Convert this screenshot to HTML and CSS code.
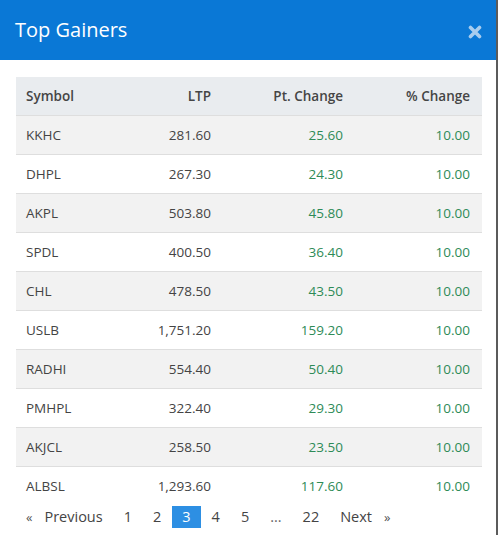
FILE: index.html
```html
<!DOCTYPE html>
<html lang="en">
<head>
<meta charset="utf-8">
<title>Top Gainers</title>
<link rel="stylesheet" href="styles.css">
</head>
<body>
<div class="modal">
  <div class="modal-header">
    <h1 class="modal-title">Top Gainers</h1>
    <span class="close" aria-label="Close">
      <svg width="14" height="14" viewBox="0 0 14 14"><path d="M2.5 2.5 L11.5 11.5 M11.5 2.5 L2.5 11.5" stroke="#a8cdef" stroke-width="3.6" stroke-linecap="round"/></svg>
    </span>
  </div>
  <div class="modal-body">
    <table class="gainers">
      <colgroup>
        <col class="w-sym"><col class="w-ltp"><col class="w-pt"><col class="w-pc">
      </colgroup>
      <thead>
        <tr><th class="c-sym">Symbol</th><th class="c-ltp">LTP</th><th class="c-pt">Pt. Change</th><th class="c-pc">% Change</th></tr>
      </thead>
      <tbody>
        <tr><td class="c-sym">KKHC</td><td class="c-ltp">281.60</td><td class="c-pt up">25.60</td><td class="c-pc up">10.00</td></tr>
        <tr><td class="c-sym">DHPL</td><td class="c-ltp">267.30</td><td class="c-pt up">24.30</td><td class="c-pc up">10.00</td></tr>
        <tr><td class="c-sym">AKPL</td><td class="c-ltp">503.80</td><td class="c-pt up">45.80</td><td class="c-pc up">10.00</td></tr>
        <tr><td class="c-sym">SPDL</td><td class="c-ltp">400.50</td><td class="c-pt up">36.40</td><td class="c-pc up">10.00</td></tr>
        <tr><td class="c-sym">CHL</td><td class="c-ltp">478.50</td><td class="c-pt up">43.50</td><td class="c-pc up">10.00</td></tr>
        <tr><td class="c-sym">USLB</td><td class="c-ltp">1,751.20</td><td class="c-pt up">159.20</td><td class="c-pc up">10.00</td></tr>
        <tr><td class="c-sym">RADHI</td><td class="c-ltp">554.40</td><td class="c-pt up">50.40</td><td class="c-pc up">10.00</td></tr>
        <tr><td class="c-sym">PMHPL</td><td class="c-ltp">322.40</td><td class="c-pt up">29.30</td><td class="c-pc up">10.00</td></tr>
        <tr><td class="c-sym">AKJCL</td><td class="c-ltp">258.50</td><td class="c-pt up">23.50</td><td class="c-pc up">10.00</td></tr>
        <tr><td class="c-sym">ALBSL</td><td class="c-ltp">1,293.60</td><td class="c-pt up">117.60</td><td class="c-pc up">10.00</td></tr>
      </tbody>
    </table>
    <nav class="pager">
      <a class="pg prev"><span class="arrow">«</span>Previous</a>
      <a class="pg">1</a>
      <a class="pg">2</a>
      <a class="pg active">3</a>
      <a class="pg">4</a>
      <a class="pg">5</a>
      <span class="pg dots">...</span>
      <a class="pg">22</a>
      <a class="pg next">Next<span class="arrow arrow-r">»</span></a>
    </nav>
  </div>
</div>
</body>
</html>
```
FILE: styles.css
```css
html, body {
  margin: 0;
  padding: 0;
  background: #ffffff;
}
body {
  font-family: "Open Sans", "Noto Sans", sans-serif;
  color: #444444;
}
.modal {
  width: 496px;
  height: 535px;
  border-right: 2px solid #5b5b5b;
  background: #ffffff;
  overflow: hidden;
}
.modal-header {
  height: 60px;
  background: #0a78d6;
  display: flex;
  align-items: center;
  justify-content: space-between;
  padding: 0 14px 0 15px;
}
.modal-title {
  margin: 0;
  font-size: 20px;
  font-weight: 500;
  color: #ffffff;
  line-height: 1;
  padding-bottom: 1px;
}
.close {
  display: flex;
  align-items: center;
  margin-top: 4px;
}
.modal-body {
  padding: 17px 14px 0 16px;
}
.gainers {
  width: 466px;
  table-layout: fixed;
  border-collapse: collapse;
  font-size: 13.5px;
}
.w-sym { width: 100px; }
.w-ltp { width: 105px; }
.w-pt { width: 132px; }
.w-pc { width: 129px; }
.gainers th {
  background: #e9ecef;
  font-weight: 600;
  height: 38px;
  padding: 0 10px;
  color: #454545;
}
.gainers td {
  height: 38px;
  padding: 0 10px;
  border-top: 1px solid #dedede;
  color: #444444;
}
.gainers tbody tr:nth-child(odd) td {
  background: #f2f2f2;
}
.c-sym { text-align: left; }
.c-ltp { text-align: right; }
.c-pt { text-align: right; }
.gainers .c-pc { text-align: right; padding-right: 12px; }
.gainers td.up { color: #2e8b57; }
.pager {
  display: flex;
  align-items: center;
  height: 22px;
  margin-top: 1px;
  font-size: 14.5px;
  gap: 1px;
}
.pg {
  display: block;
  padding: 0 10px;
  line-height: 22px;
  color: #444444;
}
.pg.active {
  background: #2d8fe3;
  color: #ffffff;
}
.arrow {
  font-size: 13px;
  color: #555555;
  margin-right: 12px;
}
.arrow-r {
  margin-right: 0;
  margin-left: 12px;
}
.dots {
  color: #666666;
}
```
